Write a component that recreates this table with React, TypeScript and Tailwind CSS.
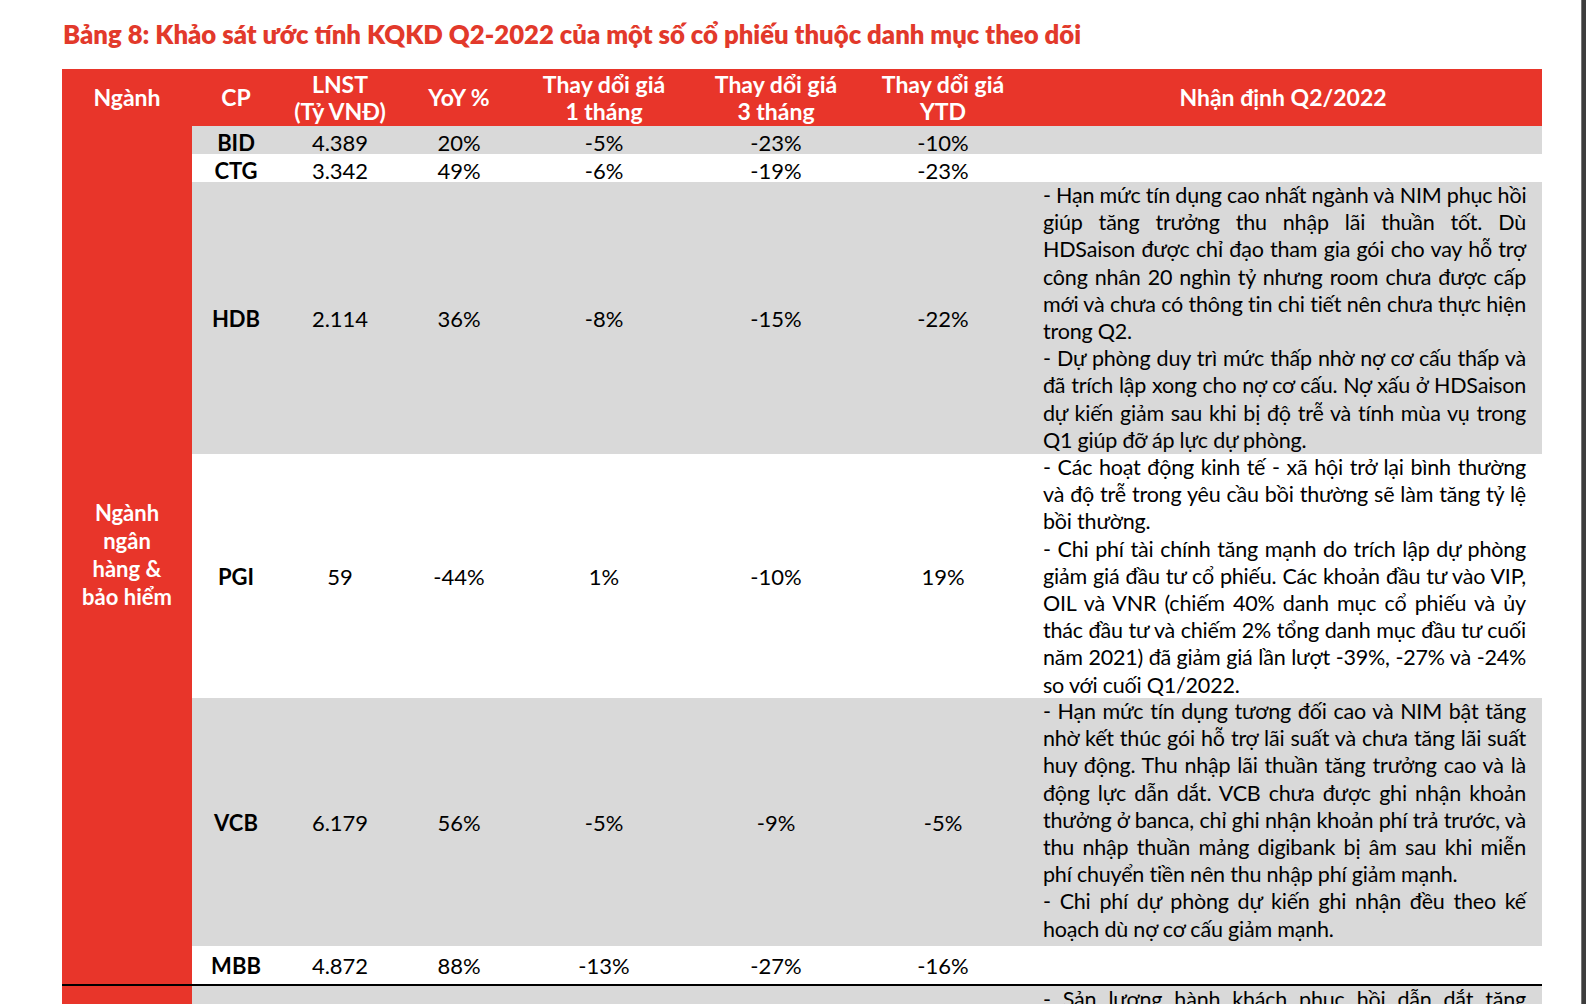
const cols = 'grid grid-cols-[88px_120px_118px_172px_172px_162px_518px]';

type Row = {
  cp: string;
  lnst: string;
  yoy: string;
  m1: string;
  m3: string;
  ytd: string;
  h: string;
  bg: string;
  note: string[][];
};

const rows: Row[] = [
  { cp: 'BID', lnst: '4.389', yoy: '20%', m1: '-5%', m3: '-23%', ytd: '-10%', h: 'h-[28px] pb-[5px]', bg: 'bg-[#d9d9d9]', note: [] },
  { cp: 'CTG', lnst: '3.342', yoy: '49%', m1: '-6%', m3: '-19%', ytd: '-23%', h: 'h-[28px] pb-[5px]', bg: 'bg-white', note: [] },
  {
    cp: 'HDB', lnst: '2.114', yoy: '36%', m1: '-8%', m3: '-15%', ytd: '-22%', h: 'h-[272px]', bg: 'bg-[#d9d9d9]',
    note: [
      [
        '- Hạn mức tín dụng cao nhất ngành và NIM phục hồi',
        'giúp tăng trưởng thu nhập lãi thuần tốt. Dù',
        'HDSaison được chỉ đạo tham gia gói cho vay hỗ trợ',
        'công nhân 20 nghìn tỷ nhưng room chưa được cấp',
        'mới và chưa có thông tin chi tiết nên chưa thực hiện',
        'trong Q2.',
      ],
      [
        '- Dự phòng duy trì mức thấp nhờ nợ cơ cấu thấp và',
        'đã trích lập xong cho nợ cơ cấu. Nợ xấu ở HDSaison',
        'dự kiến giảm sau khi bị độ trễ và tính mùa vụ trong',
        'Q1 giúp đỡ áp lực dự phòng.',
      ],
    ],
  },
  {
    cp: 'PGI', lnst: '59', yoy: '-44%', m1: '1%', m3: '-10%', ytd: '19%', h: 'h-[244px]', bg: 'bg-white',
    note: [
      [
        '- Các hoạt động kinh tế - xã hội trở lại bình thường',
        'và độ trễ trong yêu cầu bồi thường sẽ làm tăng tỷ lệ',
        'bồi thường.',
      ],
      [
        '- Chi phí tài chính tăng mạnh do trích lập dự phòng',
        'giảm giá đầu tư cổ phiếu. Các khoản đầu tư vào VIP,',
        'OIL và VNR (chiếm 40% danh mục cổ phiếu và ủy',
        'thác đầu tư và chiếm 2% tổng danh mục đầu tư cuối',
        'năm 2021) đã giảm giá lần lượt -39%, -27% và -24%',
        'so với cuối Q1/2022.',
      ],
    ],
  },
  {
    cp: 'VCB', lnst: '6.179', yoy: '56%', m1: '-5%', m3: '-9%', ytd: '-5%', h: 'h-[248px]', bg: 'bg-[#d9d9d9]',
    note: [
      [
        '- Hạn mức tín dụng tương đối cao và NIM bật tăng',
        'nhờ kết thúc gói hỗ trợ lãi suất và chưa tăng lãi suất',
        'huy động. Thu nhập lãi thuần tăng trưởng cao và là',
        'động lực dẫn dắt. VCB chưa được ghi nhận khoản',
        'thưởng ở banca, chỉ ghi nhận khoản phí trả trước, và',
        'thu nhập thuần mảng digibank bị âm sau khi miễn',
        'phí chuyển tiền nên thu nhập phí giảm mạnh.',
      ],
      ['- Chi phí dự phòng dự kiến ghi nhận đều theo kế', 'hoạch dù nợ cơ cấu giảm mạnh.'],
    ],
  },
  { cp: 'MBB', lnst: '4.872', yoy: '88%', m1: '-13%', m3: '-27%', ytd: '-16%', h: 'h-[38px]', bg: 'bg-white', note: [] },
];

function Note({ paras }: { paras: string[][] }) {
  return (
    <div className="pl-[19px] pr-[16px] leading-[27.2px] text-[21.5px] tracking-[-0.2px]">
      {paras.map((p, i) => (
        <div key={i}>
          {p.map((line, j) => (
            <div
              key={j}
              className={
                j < p.length - 1
                  ? 'whitespace-nowrap text-justify [text-align-last:justify]'
                  : 'whitespace-nowrap'
              }
            >
              {line}
            </div>
          ))}
        </div>
      ))}
    </div>
  );
}

function DataRow({ r }: { r: Row }) {
  return (
    <div className={`${cols} ${r.h} ${r.bg}`}>
      <div className="flex items-center justify-center font-bold">{r.cp}</div>
      <div className="flex items-center justify-center">{r.lnst}</div>
      <div className="flex items-center justify-center">{r.yoy}</div>
      <div className="flex items-center justify-center">{r.m1}</div>
      <div className="flex items-center justify-center">{r.m3}</div>
      <div className="flex items-center justify-center">{r.ytd}</div>
      <div>{r.note.length > 0 && <Note paras={r.note} />}</div>
    </div>
  );
}

export default function App() {
  return (
    <div className="relative h-[1004px] w-[1586px] overflow-hidden bg-white font-['Lato','Noto_Sans',sans-serif] text-[22px] text-black">
      <div className="pl-[63px] pt-[18px] h-[69px]">
        <h1 className="text-[25.7px] leading-[32px] font-extrabold text-[#e2392b] whitespace-nowrap">
          Bảng 8: Khảo sát ước tính KQKD Q2-2022 của một số cổ phiếu thuộc danh mục theo dõi
        </h1>
      </div>

      <div className="ml-[62px] w-[1480px]">
        {/* header */}
        <div className="flex h-[57px] bg-[#e8352a] text-white font-bold text-[23px] leading-[27px]">
          <div className="w-[130px] flex items-center justify-center">Ngành</div>
          <div className={`${cols} flex-1`}>
            <div className="flex items-center justify-center">CP</div>
            <div className="flex items-center justify-center text-center">
              LNST
              <br />
              (Tỷ VNĐ)
            </div>
            <div className="flex items-center justify-center">YoY %</div>
            <div className="flex items-center justify-center text-center">
              Thay dổi giá
              <br />1 tháng
            </div>
            <div className="flex items-center justify-center text-center">
              Thay dổi giá
              <br />3 tháng
            </div>
            <div className="flex items-center justify-center text-center">
              Thay dổi giá
              <br />
              YTD
            </div>
            <div className="flex items-center justify-center">Nhận định Q2/2022</div>
          </div>
        </div>

        {/* group 1 */}
        <div className="flex border-b-2 border-black">
          <div className="w-[130px] bg-[#e8352a] text-white font-bold flex items-center justify-center text-center leading-[28px]">
            Ngành
            <br />
            ngân
            <br />
            hàng &amp;
            <br />
            bảo hiểm
          </div>
          <div className="flex-1">
            {rows.map((r) => (
              <DataRow key={r.cp} r={r} />
            ))}
          </div>
        </div>

        {/* group 2 (cut off by the window) */}
        <div className="flex h-[60px]">
          <div className="w-[130px] bg-[#e8352a]" />
          <div className={`${cols} flex-1 bg-[#d9d9d9]`}>
            <div />
            <div />
            <div />
            <div />
            <div />
            <div />
            <Note paras={[['- Sản lượng hành khách phục hồi dẫn dắt tăng', '']]} />
          </div>
        </div>
      </div>

      <div className="absolute right-0 top-0 h-full w-[5px] bg-[#3d3d3d] border-l border-[#777]" />
    </div>
  );
}
